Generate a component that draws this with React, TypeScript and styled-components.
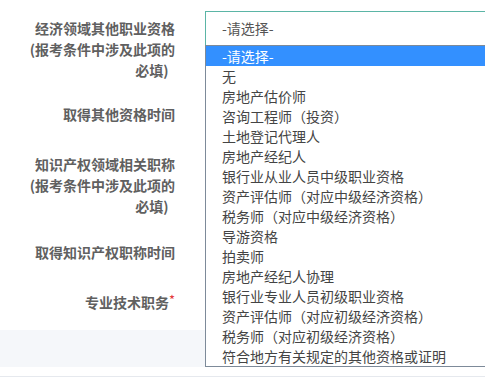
import React from 'react';
import styled, { createGlobalStyle } from 'styled-components';

const GlobalStyle = createGlobalStyle`
  html, body {
    margin: 0;
    padding: 0;
    background: #fff;
    overflow: hidden;
  }
  body {
    font-family: "Noto Sans CJK SC", "Noto Sans", sans-serif;
  }
`;

const OPTIONS = [
  '-请选择-',
  '无',
  '房地产估价师',
  '咨询工程师（投资）',
  '土地登记代理人',
  '房地产经纪人',
  '银行业从业人员中级职业资格',
  '资产评估师（对应中级经济资格）',
  '税务师（对应中级经济资格）',
  '导游资格',
  '拍卖师',
  '房地产经纪人协理',
  '银行业专业人员初级职业资格',
  '资产评估师（对应初级经济资格）',
  '税务师（对应初级经济资格）',
  '符合地方有关规定的其他资格或证明',
];

const Page = styled.div`
  width: 485px;
  height: 379px;
  position: relative;
  overflow: hidden;
`;

const Form = styled.div`
  display: flex;
  flex-direction: column;
  padding-top: 11px;
`;

const Row = styled.div<{ $space?: number }>`
  display: flex;
  align-items: flex-start;
  gap: 30px;
  margin-bottom: ${(p) => p.$space ?? 16}px;
  position: relative;
`;

const Label = styled.div`
  width: 175px;
  flex: none;
  padding-top: 7px;
  text-align: right;
  font-size: 14px;
  line-height: 21px;
  font-weight: 700;
  color: #606060;
`;

const Required = styled.span`
  color: #e4393c;
  font-weight: 400;
  font-size: 13px;
  vertical-align: top;
  line-height: 16px;
`;

const Field = styled.div`
  position: relative;
  height: 34px;
  flex: 1;
`;

const SelectBox = styled.div`
  box-sizing: border-box;
  width: 320px;
  height: 35px;
  border: 1px solid #5bb5a6;
  padding-left: 16px;
  font-size: 14px;
  line-height: 33px;
  color: #555;
  background: #fff;
`;

const List = styled.ul`
  position: absolute;
  top: 34px;
  left: 0;
  z-index: 5;
  margin: 0;
  padding: 0;
  list-style: none;
  width: 320px;
  box-sizing: border-box;
  border: 1px solid #7d8a99;
  background: #fff;
`;

const Option = styled.li<{ $active?: boolean }>`
  height: 20px;
  line-height: 20px;
  padding-left: 16px;
  font-size: 14px;
  white-space: nowrap;
  color: ${(p) => (p.$active ? '#fff' : '#444')};
  background: ${(p) => (p.$active ? '#3390ff' : 'transparent')};
`;

const Band = styled.div`
  height: 37px;
  margin-top: -5px;
  background: #f5f7fa;
  border-bottom: 1px solid #fff;
`;

const Footer = styled.div`
  margin-top: 8px;
  border-top: 1px solid #e6e9ee;
`;

export default function App() {
  return (
    <Page>
      <GlobalStyle />
      <Form>
        <Row>
          <Label>
            经济领域其他职业资格
            <br />
            (报考条件中涉及此项的
            <br />
            必填)&nbsp;&nbsp;
          </Label>
          <Field>
            <SelectBox>-请选择-</SelectBox>
            <List>
              {OPTIONS.map((o, i) => (
                <Option key={o} $active={i === 0}>
                  {o}
                </Option>
              ))}
            </List>
          </Field>
        </Row>
        <Row>
          <Label>取得其他资格时间</Label>
          <Field />
        </Row>
        <Row $space={18}>
          <Label>
            知识产权领域相关职称
            <br />
            (报考条件中涉及此项的
            <br />
            必填)&nbsp;&nbsp;
          </Label>
          <Field />
        </Row>
        <Row>
          <Label>取得知识产权职称时间</Label>
          <Field />
        </Row>
        <Row>
          <Label>
            专业技术职务<Required>*</Required>
          </Label>
          <Field />
        </Row>
        <Band />
        <Footer />
      </Form>
    </Page>
  );
}
